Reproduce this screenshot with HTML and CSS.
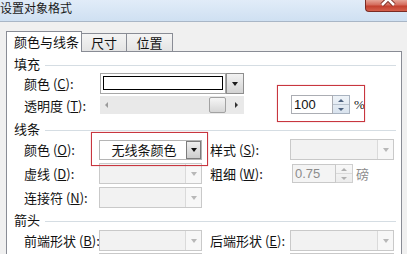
FILE: index.html
```html
<!DOCTYPE html>
<html>
<head>
<meta charset="utf-8">
<title>设置对象格式</title>
<link rel="stylesheet" href="styles.css">
</head>
<body>
<div class="dialog">
  <div class="titlebar">
    <span class="title">设置对象格式</span>
    <div class="close">
      <svg class="close-x" width="42" height="12" viewBox="0 0 42 12">
        <path d="M17 -6 L29 6 M29 -6 L17 6" stroke="#7a2a22" stroke-width="4.5" fill="none"/>
        <path d="M17 -6 L29 6 M29 -6 L17 6" stroke="#ffffff" stroke-width="2.6" fill="none"/>
      </svg>
    </div>
  </div>

  <div class="tabs">
    <div class="tab active">颜色与线条</div>
    <div class="tab t2">尺寸</div>
    <div class="tab t3">位置</div>
  </div>

  <div class="panel">
    <div class="group"><span>填充</span><i class="rule"></i></div>

    <div class="row r-color">
      <span class="lbl">颜色 (<u>C</u>):</span>
      <div class="colorpick">
        <div class="swatch"><div class="swatch-in"></div></div>
        <div class="pick-btn"><i class="tri"></i></div>
      </div>
    </div>

    <div class="row r-trans">
      <span class="lbl">透明度 (<u>T</u>):</span>
      <div class="slider">
        <i class="arr-l"></i>
        <span class="track-fill"></span>
        <span class="thumb"></span>
        <i class="arr-r"></i>
      </div>
      <div class="spin spin-pct">
        <span class="spin-field">100</span>
        <span class="spin-btns"><i class="up"></i><i class="dn"></i></span>
      </div>
      <span class="unit">%</span>
    </div>

    <div class="group g2"><span>线条</span><i class="rule"></i></div>

    <div class="row r-o">
      <span class="lbl">颜色 (<u>O</u>):</span>
      <div class="combo live">
        <span class="txt">无线条颜色</span>
        <span class="btn"><i class="tri"></i></span>
      </div>
      <span class="lbl lbl2">样式 (<u>S</u>):</span>
      <div class="combo wide"><span class="txt"></span><span class="btn"><i class="tri"></i></span></div>
    </div>

    <div class="row r-n">
      <span class="lbl">虚线 (<u>D</u>):</span>
      <div class="combo"><span class="txt"></span><span class="btn"><i class="tri"></i></span></div>
      <span class="lbl lbl2">粗细 (<u>W</u>):</span>
      <div class="spin spin-off">
        <span class="spin-field">0.75</span>
        <span class="spin-btns"><i class="up"></i><i class="dn"></i></span>
      </div>
      <span class="unit unit-off">磅</span>
    </div>

    <div class="row r-n">
      <span class="lbl">连接符 (<u>N</u>):</span>
      <div class="combo"><span class="txt"></span><span class="btn"><i class="tri"></i></span></div>
    </div>

    <div class="group g3"><span>箭头</span><i class="rule"></i></div>

    <div class="row r-o">
      <span class="lbl">前端形状 (<u>B</u>):</span>
      <div class="combo"><span class="txt"></span><span class="btn"><i class="tri"></i></span></div>
      <span class="lbl lbl2">后端形状 (<u>E</u>):</span>
      <div class="combo wide"><span class="txt"></span><span class="btn"><i class="tri"></i></span></div>
    </div>

    <div class="row r-last">
      <span class="lbl"></span>
      <div class="combo"><span class="txt"></span><span class="btn"><i class="tri"></i></span></div>
      <span class="lbl lbl2"></span>
      <div class="combo wide"><span class="txt"></span><span class="btn"><i class="tri"></i></span></div>
    </div>

    <div class="mark mark-pct"></div>
    <div class="mark mark-line"></div>
  </div>
</div>
</body>
</html>
```

FILE: styles.css
```css
* { box-sizing: border-box; }

html, body {
  margin: 0;
  padding: 0;
  overflow: hidden;
}

body {
  width: 407px;
  height: 254px;
  background: #f0f0f0;
  font-family: "Noto Sans CJK SC", "Noto Sans", sans-serif;
  font-size: 13px;
  line-height: 16px;
  color: #111;
}

u { text-decoration: underline; text-underline-offset: 1px; }

/* ---------- title bar ---------- */
.titlebar {
  height: 22px;
  display: flex;
  align-items: flex-start;
  background: linear-gradient(#e1ecf8, #cfe0f2);
  border-bottom: 1px solid #a9b6c6;
}

.title {
  font-size: 12px;
  line-height: 16px;
  color: #1a1a1a;
}

.close {
  margin-left: auto;
  width: 42px;
  height: 12px;
  border: 1px solid #7b2b24;
  border-top: none;
  border-right: none;
  border-bottom-left-radius: 4px;
  background: linear-gradient(#e6a497, #d46a5b 45%, #c3402f 55%, #d4604c);
  overflow: hidden;
}

.close-x { display: block; margin: -1px 0 0 -1px; }

/* ---------- tabs ---------- */
.tabs {
  position: relative;
  z-index: 2;
  display: flex;
  align-items: flex-end;
  height: 20px;
  margin: 9px 0 0 6px;
}

.tab {
  height: 18px;
  border: 1px solid #898c95;
  border-bottom: none;
  border-left: none;
  background: linear-gradient(#f4f4f4, #e4e4e4);
  display: flex;
  align-items: center;
  justify-content: center;
}

.tab.active {
  width: 76px;
  height: 21px;
  margin-bottom: -1px;
  border-left: 1px solid #898c95;
  background: #ffffff;
  justify-content: flex-start;
  padding-left: 7px;
}

.t2 { width: 45px; }
.t3 { width: 46px; }

/* ---------- panel ---------- */
.panel {
  position: relative;
  margin-left: 6px;
  width: 396px;
  height: 220px;
  border: 1px solid #898c95;
  background: #ffffff;
  padding: 4px 5px 0 7px;
  overflow: hidden;
}

.group {
  display: flex;
  align-items: center;
  height: 16px;
}

.group .rule {
  flex: 1;
  height: 1px;
  margin: 2px 0 0 5px;
  background: #d5dde3;
}

.g2 { margin-top: 7px; }
.g3 { margin-top: 4px; }

.row {
  display: flex;
  align-items: center;
  margin-left: 10px;
  height: 21px;
}

.r-color { margin-top: 1px; }
.r-trans { margin-top: 1px; height: 19px; align-items: flex-end; }
.r-o { margin-top: 2px; }
.r-n { margin-top: 3px; }
.r-last { margin-top: 2px; align-items: flex-start; }

.lbl {
  width: 75px;
  flex: none;
  white-space: nowrap;
}

.lbl2 {
  width: 80px;
  margin-left: 8px;
}

/* triangles */
.tri {
  display: block;
  width: 0;
  height: 0;
  border-left: 3.5px solid transparent;
  border-right: 3.5px solid transparent;
  border-top: 4px solid #1a1a1a;
}

/* ---------- colour picker ---------- */
.colorpick {
  display: flex;
  height: 21px;
  margin-left: 1px;
}

.swatch {
  width: 126px;
  height: 21px;
  border: 1px solid #a7a7a7;
  background: #fff;
  padding: 2px;
}

.swatch-in {
  width: 120px;
  height: 14px;
  border: 1.5px solid #000;
  background: #fff;
}

.pick-btn {
  width: 18px;
  height: 21px;
  border: 1px solid #8e8e8e;
  background: linear-gradient(#f2f2f2, #d3d3d3);
  display: flex;
  align-items: center;
  justify-content: center;
}

/* ---------- slider ---------- */
.slider {
  display: flex;
  align-items: center;
  width: 144px;
  height: 18px;
  margin-left: 1px;
  background: #e9e9e9;
}

.arr-l {
  margin-left: 5px;
  width: 0;
  height: 0;
  border-top: 3.5px solid transparent;
  border-bottom: 3.5px solid transparent;
  border-right: 3.5px solid #9a9a9a;
}

.track-fill { flex: 1; }

.thumb {
  width: 17px;
  height: 16px;
  border: 1px solid #a2a2a2;
  border-radius: 2px;
  background: linear-gradient(#f6f6f6, #d6d6d6);
}

.arr-r {
  margin: 0 6px 0 9px;
  width: 0;
  height: 0;
  border-top: 3.5px solid transparent;
  border-bottom: 3.5px solid transparent;
  border-left: 3.5px solid #333;
}

/* ---------- spinners ---------- */
.spin {
  display: flex;
  height: 19px;
}

.spin-pct {
  width: 59px;
  margin-left: 47px;
}

.spin-field {
  flex: 1;
  border: 1px solid #abadb3;
  background: #fff;
  font-family: "Liberation Sans", Arial, sans-serif;
  font-size: 13px;
  line-height: 17px;
  padding-left: 2px;
  color: #111;
}

.spin-btns {
  width: 17px;
  display: flex;
  flex-direction: column;
  border: 1px solid #a9b3c0;
  border-left: none;
  background: linear-gradient(#eef3f8, #d9e3ee);
}

.spin-btns i {
  flex: 1;
  display: flex;
  align-items: center;
  justify-content: center;
}

.spin-btns .up { border-bottom: 1px solid #b9c3cf; }

.spin-btns .up::after,
.spin-btns .dn::after {
  content: "";
  width: 0;
  height: 0;
  border-left: 3px solid transparent;
  border-right: 3px solid transparent;
}

.spin-btns .up::after { border-bottom: 3px solid #4d6280; }
.spin-btns .dn::after { border-top: 3px solid #4d6280; }

.unit {
  margin-left: 4px;
  font-family: "Liberation Serif", serif;
  align-self: center;
}

.r-trans .unit { align-self: flex-end; line-height: 18px; }

.spin-off {
  width: 61px;
  margin-left: 2px;
}

.spin-off .spin-field {
  background: #f4f4f4;
  border-color: #c9c9c9;
  color: #8c8c8c;
  padding-left: 2px;
}

.spin-off .spin-btns {
  border-color: #cfcfcf;
  background: linear-gradient(#f8f8f8, #ececec);
}

.spin-off .spin-btns .up { border-bottom-color: #dadada; }
.spin-off .spin-btns .up::after { border-bottom-color: #b0b0b0; }
.spin-off .spin-btns .dn::after { border-top-color: #b0b0b0; }

.unit-off {
  margin-left: 3px;
  font-family: "Noto Sans CJK SC", sans-serif;
  color: #8c8c8c;
}

/* ---------- combo boxes ---------- */
.combo {
  display: flex;
  width: 103px;
  height: 21px;
  border: 1px solid #c9c9c9;
  background: #f2f2f2;
}

.combo.wide {
  width: 104px;
}

.combo .txt {
  flex: 1;
  text-align: center;
  line-height: 19px;
}

.combo .btn {
  width: 16px;
  border-left: 1px solid #dadada;
  background: #f7f7f7;
  display: flex;
  align-items: center;
  justify-content: center;
}

.combo .btn .tri { border-top-color: #b8b8b8; }

.combo.live {
  background: #fff;
  border-color: #b5b5b5;
  height: 20px;
}

.combo.live .txt { padding-left: 2px; color: #111; line-height: 18px; }

.combo.live .btn {
  width: 15px;
  border: 1px solid #7c7c7c;
  background: linear-gradient(#efefef, #cdcdcd);
}

.combo.live .btn .tri { border-top-color: #111; }

/* ---------- red annotation boxes ---------- */
.mark {
  position: absolute;
  border: 1px solid #c8363f;
  box-shadow: 0 0 1px rgba(210, 70, 80, 0.6);
  pointer-events: none;
}

.mark-pct {
  left: 270px;
  top: 33px;
  width: 88px;
  height: 37px;
}

.mark-line {
  left: 84px;
  top: 80px;
  width: 117px;
  height: 34px;
}
```
